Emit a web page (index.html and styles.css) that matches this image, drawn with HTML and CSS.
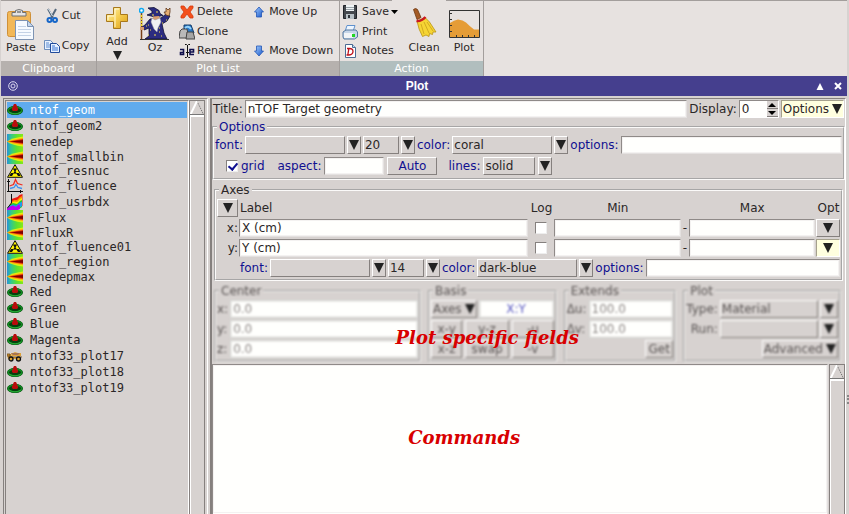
FILE: index.html
```html
<!DOCTYPE html>
<html lang="en">
<head>
<meta charset="utf-8">
<title>Plot</title>
<link rel="stylesheet" href="styles.css">
</head>
<body>
<svg class="defs" aria-hidden="true">
  <defs>
    <linearGradient id="heat" x1="0" x2="1" y1="0" y2="0">
      <stop offset="0" stop-color="#2b8fd8"/><stop offset=".25" stop-color="#30c890"/><stop offset=".6" stop-color="#5ce030"/><stop offset="1" stop-color="#86e818"/>
    </linearGradient>
    <linearGradient id="gold" x1="0" x2="1" y1="0" y2="1">
      <stop offset="0" stop-color="#fff6b8"/><stop offset=".5" stop-color="#f5cd50"/><stop offset="1" stop-color="#dc9f18"/>
    </linearGradient>
    <linearGradient id="blue" x1="0" x2="1" y1="0" y2="1">
      <stop offset="0" stop-color="#a8d0ff"/><stop offset="1" stop-color="#1453c8"/>
    </linearGradient>
  </defs>
  <symbol id="i-geom" viewBox="0 0 16 16">
    <ellipse cx="8" cy="8.500" rx="8" ry="4.500" fill="#063f0e"/>
    <ellipse cx="8" cy="8.500" rx="6.800" ry="3.500" fill="none" stroke="#128a22" stroke-width="1.600"/>
    <path d="M2 10q6 3.500 12 0" fill="none" stroke="#2eb33c" stroke-width=".8"/>
    <path d="M7 2h2l1 2v1l1 1v2l-1 1H6L5 8V6l1-1V4z" fill="#b80c0c"/>
  </symbol>
  <symbol id="i-heat" viewBox="0 0 15 15" preserveAspectRatio="none">
    <path d="M0 0h15v15H0z" fill="url(#heat)"/>
    <path d="M0 7.500Q4 4 15 2.500v10Q4 11 0 7.500z" fill="#e2ee10"/>
    <path d="M0 7.500Q5 5.500 15 4v7Q5 9.500 0 7.500z" fill="#ffa50a"/>
    <path d="M1 7.500L15 5v5z" fill="#e02808"/>
    <path d="M3 7.500l12-1.500v3z" fill="#7d0000"/>
  </symbol>
  <symbol id="i-rad" viewBox="0 0 16 14">
    <path d="M8 .7L15.500 13.300H.5z" fill="#fff200" stroke="#111" stroke-width="1"/>
    <path d="M8 8L5.800 4.500h4.400zM7 9l-2 3H2.300L4 9zM9 9l2 3h2.700L12 9z" fill="#111"/><circle cx="8" cy="8.500" r="1.200" fill="#111"/>
  </symbol>
  <symbol id="i-flu" viewBox="0 0 16 16">
    <path d="M1.500 1v13M0 13.500h16M0 3.500h3M13.500 12v3" fill="none" stroke="#111" shape-rendering="crispEdges"/>
    <path d="M2.500 8l4-1.500 2-5 2 4 5 1.500" fill="none" stroke="#f02a20" stroke-width="1.300"/>
    <path d="M3 10.500l4-1 2-3 2 3 4 1" fill="none" stroke="#3d90f0" stroke-width="1.300"/>
  </symbol>
  <symbol id="i-bdx" viewBox="0 0 16 16">
    <path d="M4.500 5l3-1 3-1 2-2 3-1v12l-3 1-9-1z" fill="#f01810"/>
    <path d="M4 8l3-2 3 0 3-3 2-1v10l-3 2-9-2z" fill="#ff8a00"/>
    <path d="M3 10l4-2.500 3 .5 3-3 2-1v9l-3 1-9-1z" fill="#f4ee00"/>
    <path d="M2 11l4-2 4 1 3-3 2-1v7l-3 2-10-1z" fill="#20c838"/>
    <path d="M1 12.500l5-2 3 1 4-3 2-.5v4l-3 2-11 1z" fill="#2098f0"/>
    <path d="M0 14.500l3-2 3-1 3 1.500 3-3 1 2 0 3-2 1H0z" fill="#c000f0"/>
    <path d="M4.500 0v9L0 14.500" fill="none" stroke="#111"/>
  </symbol>
  <symbol id="i-truck" viewBox="0 0 16 16">
    <path d="M4 5h2l2-1 3 1h3v3H5zM0 6h4l1 3h8v2H1z" fill="#dfa237"/><path d="M4 5h9l-2 2H6z" fill="#a87552"/>
    <path d="M0 6h3v2H0zM1 9h14" fill="none" stroke="#664010" stroke-width=".8"/>
    <circle cx="4" cy="11" r="2" fill="#d8a030" stroke="#111" stroke-width="1.300"/><circle cx="11.500" cy="11" r="2" fill="#d8a030" stroke="#111" stroke-width="1.300"/>
  </symbol>
  <symbol id="i-paste" viewBox="0 0 28 31">
    <rect x=".5" y="2.500" width="23" height="25" rx="2" fill="#f2b858" stroke="#cf9038"/>
    <path d="M5 7V3.500h3.500V1.500Q12 -.5 15.500 1.500v2H19V7z" fill="#e4e4e4" stroke="#6f7072"/><path d="M10 3h4" stroke="#444"/>
    <path d="M8.500 11.500h12l6 6v13h-18z" fill="#f6faff" stroke="#7d93b3"/><path d="M20.500 11.500v6h6z" fill="#c3d6ee" stroke="#7d93b3"/>
    <path d="M11 17.500h8M11 20.500h13M11 23.500h13M11 26.500h13" stroke="#c3d2e6"/>
  </symbol>
  <symbol id="i-cut" viewBox="0 0 16 16">
    <path d="M4 1l5 9M12 1L7 10" stroke="#55687c" stroke-width="2"/><path d="M4.500 1l4 7" stroke="#d9e5ee"/>
    <circle cx="5.500" cy="12" r="2" fill="none" stroke="#1766c8" stroke-width="2"/><circle cx="11" cy="12" r="2" fill="none" stroke="#1766c8" stroke-width="2"/>
  </symbol>
  <symbol id="i-copy" viewBox="0 0 16 16">
    <path d="M.5 2.500h6l3 3v6h-9z" fill="#e7f1ff" stroke="#6c8dbb"/><path d="M2 5h3M2 7h5M2 9h5" stroke="#5b8ad0"/>
    <path d="M6.500 5.500h6l3 3v6h-9z" fill="#e7f1ff" stroke="#214b9b"/><path d="M8 8h3M8 10h6M8 12h6" stroke="#3673d4"/>
  </symbol>
  <symbol id="i-add" viewBox="0 0 22 22">
    <path d="M7.500.5h7v7h7v7h-7v7h-7v-7h-7v-7h7z" fill="url(#gold)" stroke="#a8781c"/><path d="M9 20V2h4M2 13V9h6" fill="none" stroke="#fff9d8"/>
  </symbol>
  <symbol id="i-oz" viewBox="0 0 33 33">
    <path d="M2.500 6v27" stroke="#784018" stroke-width="1.500"/><path d="M2.500 8v13" stroke="#f2d820" stroke-width="1.500" stroke-dasharray="2 1"/>
    <circle cx="2.500" cy="3.500" r="2" fill="#fff" stroke="#10a8f0" stroke-width="1.500"/>
    <path d="M8 8l5-2 0-2-4-3 6-.5 5 3 1 3 3 2-8 1.500z" fill="#2c2c80" stroke="#101035" stroke-width=".8"/>
    <path d="M11 12l-5 6-3 2 2 3 5-2v8l-4 3h22l-3-6-2-9 5-3 3-5-4-2-5 4z" fill="#2c2c80" stroke="#101035" stroke-width=".8"/>
    <path d="M27 8l-2-3 2 0V1l2 2 2-2v4l-1 4z" fill="#e5ae74" stroke="#60381c" stroke-width=".8"/>
    <path d="M14 9.500l6-.5 1 4-4 3-3-3z" fill="#d99d70"/><path d="M13 11l3 2 5-2 1 4-3 6-1 4-3-3-3-7z" fill="#f1f1f3" stroke="#92929f" stroke-width=".5"/>
    <path d="M1 20h4v3H1z" fill="#d99d70"/>
    <path d="M17 5h2M9 18h1M11 23h1M9 28h1M15 28h2M20 25h1M22 29h1M23 16h1M27 13h1M13 8h2M7 19h1M20 21h1" stroke="#f7e048" stroke-width="1.200"/>
    <path d="M1 32.500h29" stroke="#333"/>
  </symbol>
  <symbol id="i-del" viewBox="0 0 16 16"><path d="M2 2h3l3 4 3-4h3v2l-3 4 3 4v2h-3l-3-4-3 4H2v-2l3-4-3-4z" fill="#f4501c" stroke="#d63a0c" stroke-width=".8"/></symbol>
  <symbol id="i-clone" viewBox="0 0 16 16">
    <path d="M5 1h7l3 8H5z" fill="#2878c8" stroke="#153c68"/><path d="M3 5h5l2 9H0L1 7z" fill="#b9b9b9" stroke="#444"/><path d="M8 8h6l2 7H7z" fill="#a5a5a5" stroke="#444"/><path d="M6 4q3-3 6 1" fill="none" stroke="#95d3fa" stroke-width="2"/>
  </symbol>
  <symbol id="i-ren" viewBox="0 0 16 16">
    <path d="M1 6.500h3.500v5H1.500v-2h3M10.500 9h4V6.500h-3.500v5h4" fill="none" stroke="#10104d" stroke-width="1.600"/>
    <path d="M6 1.500h1.500l1 1 1-1H11M8.500 2v12M6 14.500h1.500l1-1 1 1H11M7 9.500h3" fill="none" stroke="#111"/>
  </symbol>
  <symbol id="i-up" viewBox="0 0 12 12"><path d="M6 1l4.500 5H8.500v5h-5V6h-2z" fill="url(#blue)" stroke="#2457b5" stroke-width=".8"/></symbol>
  <symbol id="i-down" viewBox="0 0 12 12"><path d="M6 11l4.500-5H8.500V1h-5v5h-2z" fill="url(#blue)" stroke="#2457b5" stroke-width=".8"/></symbol>
  <symbol id="i-save" viewBox="0 0 16 16">
    <path d="M1.500 1.500h13v13h-13z" fill="#45484d" stroke="#202328"/><path d="M4 1h8v6H4z" fill="#f0f4f5"/><path d="M4 3.500h8M4 5.500h8" stroke="#9ba5ab"/><path d="M4 10h8v5H4z" fill="#b8c0c5"/><path d="M6 11h2v3H6z" fill="#30343a"/>
  </symbol>
  <symbol id="i-print" viewBox="0 0 16 16">
    <path d="M5 1.500h8l-2 6H3z" fill="#eef6ff" stroke="#5f91cd"/><path d="M1 8l3-2h10l1.500 2v5l-3 2H2l-1-2z" fill="#c6d5e8" stroke="#55789f"/><path d="M2 9h9v5H2z" fill="#f2f4f7"/><path d="M10 10h3v3h-3z" fill="#22d522"/>
  </symbol>
  <symbol id="i-notes" viewBox="0 0 16 16">
    <path d="M3.500 1.500h7l3 3v10h-10z" fill="#fff" stroke="#4a6b93"/><path d="M10.500 1.500v3h3" fill="#c7d8ef" stroke="#4a6b93"/>
    <path d="M6.800 6l-1 6M4.500 12h2.500q4-.5 4-3.500T7.500 5.500H5" fill="none" stroke="#bd101a" stroke-width="1.300"/>
  </symbol>
  <symbol id="i-clean" viewBox="0 0 28 30">
    <path d="M3.500 1.500q2-2 4 0l3.500 8-4 2z" fill="#a45a24" stroke="#6d3812" stroke-width=".8"/>
    <path d="M7 13l8-3.500 4.500 4.500L26 24l-3 0-.5 2.500-3-1-.5 3-3-1.500-3.500 1.500q-4-7-5.500-15.500z" fill="#f6d534" stroke="#b99314" stroke-width=".8"/>
    <path d="M11 16l3 10M14 14l5 11M17 14l6 9" fill="none" stroke="#c9a01c" stroke-width=".8"/><path d="M6.500 13q5 .5 9-4" fill="none" stroke="#c91820" stroke-width="2.500"/>
  </symbol>
  <symbol id="i-plot" viewBox="0 0 31 28">
    <path d="M1 27V13Q5 10 9 9.500q5 .5 8 3 4 4 8 7h5v7.500z" fill="#e59c36"/><path d="M.5.500h30v27H.5z" fill="none" stroke="#333"/>
    <path d="M1 3.500h2M1 9.500h2M1 15.500h2M1 21.500h2M7.500 27v-2M13.500 27v-2M19.500 27v-2M25.500 27v-2" stroke="#333"/>
  </symbol>
  <symbol id="i-tri" viewBox="0 0 10 10"><path d="M0 0h10L5 10z" fill="#222"/></symbol>
  <symbol id="i-scroll" viewBox="0 0 14 14"><path d="M7 0l6.500 13.500H.5" fill="none" stroke="#666" stroke-dasharray="1 1"/><path d="M7 0L.5 13.500" stroke="#fff" stroke-width="2"/><path d="M0 13.500h14" stroke="#777"/></symbol>
</svg>

<div class="app">
  <header class="ribbon">
    <section class="group clip" aria-label="Clipboard">
      <div class="tools">
        <button class="big"><svg width="28" height="31"><use href="#i-paste"/></svg>Paste</button>
        <div class="stack two">
          <button class="tool"><svg><use href="#i-cut"/></svg>Cut</button>
          <button class="tool"><svg><use href="#i-copy"/></svg>Copy</button>
        </div>
      </div>
      <h2>Clipboard</h2>
    </section>
    <section class="group list-tools" aria-label="Plot List">
      <div class="tools">
        <button class="big add"><svg width="22" height="22"><use href="#i-add"/></svg>Add<svg width="9" height="9"><use href="#i-tri"/></svg></button>
        <button class="big"><svg width="33" height="33"><use href="#i-oz"/></svg>Oz</button>
        <div class="stack">
          <button class="tool"><svg><use href="#i-del"/></svg>Delete</button>
          <button class="tool"><svg><use href="#i-clone"/></svg>Clone</button>
          <button class="tool"><svg><use href="#i-ren"/></svg>Rename</button>
        </div>
        <div class="stack moves">
          <button class="tool"><svg class="small"><use href="#i-up"/></svg>Move Up</button>
          <button class="tool"><svg class="small"><use href="#i-down"/></svg>Move Down</button>
        </div>
      </div>
      <h2>Plot List</h2>
    </section>
    <section class="group action" aria-label="Action">
      <div class="tools">
        <div class="stack">
          <button class="tool"><svg><use href="#i-save"/></svg>Save<svg class="mini" viewBox="0 0 7 4"><path d="M0 0h7L3.500 4z"/></svg></button>
          <button class="tool"><svg><use href="#i-print"/></svg>Print</button>
          <button class="tool"><svg><use href="#i-notes"/></svg>Notes</button>
        </div>
        <button class="big"><svg width="28" height="30"><use href="#i-clean"/></svg>Clean</button>
        <button class="big"><svg width="31" height="28"><use href="#i-plot"/></svg>Plot</button>
      </div>
      <h2>Action</h2>
    </section>
  </header>

  <div class="titlebar">
    <svg class="ring" viewBox="0 0 10 10"><circle cx="5" cy="5" r="4.300"/><circle cx="5" cy="5" r="2"/></svg>
    <h1>Plot</h1>
    <button aria-label="Maximize"><svg viewBox="0 0 8 8"><path d="M4 1l3.500 7h-7z" fill="#fff"/></svg></button>
    <button aria-label="Close"><svg viewBox="0 0 8 8"><path d="M1 1l6 6M7 1L1 7" stroke="#fff" stroke-width="2"/></svg></button>
  </div>

  <main class="work">
    <aside class="side">
      <ul class="plots">
        <li class="sel"><svg><use href="#i-geom"/></svg>ntof_geom</li>
        <li><svg><use href="#i-geom"/></svg>ntof_geom2</li>
        <li class="h15"><svg><use href="#i-heat"/></svg>enedep</li>
        <li class="h15"><svg><use href="#i-heat"/></svg>ntof_smallbin</li>
        <li class="h14"><svg><use href="#i-rad"/></svg>ntof_resnuc</li>
        <li><svg><use href="#i-flu"/></svg>ntof_fluence</li>
        <li><svg><use href="#i-bdx"/></svg>ntof_usrbdx</li>
        <li class="h15"><svg><use href="#i-heat"/></svg>nFlux</li>
        <li class="h15"><svg><use href="#i-heat"/></svg>nFluxR</li>
        <li class="h14"><svg><use href="#i-rad"/></svg>ntof_fluence01</li>
        <li class="h15"><svg><use href="#i-heat"/></svg>ntof_region</li>
        <li class="h15"><svg><use href="#i-heat"/></svg>enedepmax</li>
        <li><svg><use href="#i-geom"/></svg>Red</li>
        <li><svg><use href="#i-geom"/></svg>Green</li>
        <li><svg><use href="#i-geom"/></svg>Blue</li>
        <li><svg><use href="#i-geom"/></svg>Magenta</li>
        <li><svg><use href="#i-truck"/></svg>ntof33_plot17</li>
        <li><svg><use href="#i-geom"/></svg>ntof33_plot18</li>
        <li><svg><use href="#i-geom"/></svg>ntof33_plot19</li>
      </ul>
      <div class="scroll"><svg><use href="#i-scroll"/></svg><div class="thumb"></div></div>
    </aside>

    <div class="form">
      <div class="row head">
        <label for="title">Title:</label><input id="title" class="grow" value="nTOF Target geometry">
        <label for="display">Display:</label>
        <span class="spin"><input id="display" value="0"><span class="arrows"><button aria-label="Increase"><svg viewBox="0 0 8 4"><path d="M0 4h8L4 0z"/></svg></button><button aria-label="Decrease"><svg viewBox="0 0 8 4"><path d="M0 0h8L4 4z"/></svg></button></span></span>
        <button class="btn yellow opts">Options<svg><use href="#i-tri"/></svg></button>
      </div>

      <fieldset class="frame options navy">
        <legend>Options</legend>
        <div class="row">
          <label for="font">font:</label><select id="font" class="w100"><option></option></select><button class="btn drop" aria-label="Fonts"><svg><use href="#i-tri"/></svg></button>
          <select class="w36" aria-label="Font size"><option>20</option></select><button class="btn drop" aria-label="Sizes"><svg><use href="#i-tri"/></svg></button>
          <label for="color">color:</label><select id="color" class="w100"><option>coral</option></select><button class="btn drop" aria-label="Colors"><svg><use href="#i-tri"/></svg></button>
          <label for="opt">options:</label><input id="opt" class="grow">
        </div>
        <div class="row second">
          <input type="checkbox" id="grid" checked><label for="grid">grid</label>
          <label class="aspect" for="aspect">aspect:</label><input id="aspect" class="w60">
          <button class="btn auto">Auto</button>
          <label for="lines">lines:</label><select id="lines" class="w52"><option>solid</option></select><button class="btn drop" aria-label="Line styles"><svg><use href="#i-tri"/></svg></button>
        </div>
      </fieldset>

      <fieldset class="frame axes">
        <legend>Axes</legend>
        <div class="axis-grid">
          <button class="btn pick" aria-label="Axes"><svg><use href="#i-tri"/></svg></button><span>Label</span><span class="mid">Log</span><span class="mid">Min</span><span></span><span class="mid">Max</span><span class="mid">Opt</span>
          <label class="end" for="xl">x:</label><input id="xl" value="X (cm)"><input type="checkbox" aria-label="x log"><input aria-label="x min"><span class="mid">-</span><input aria-label="x max"><button class="btn" aria-label="x options"><svg><use href="#i-tri"/></svg></button>
          <label class="end" for="yl">y:</label><input id="yl" value="Y (cm)"><input type="checkbox" aria-label="y log"><input aria-label="y min"><span class="mid">-</span><input aria-label="y max"><button class="btn yellow" aria-label="y options"><svg><use href="#i-tri"/></svg></button>
        </div>
        <div class="row navy third">
          <label for="afont">font:</label><select id="afont" class="w100"><option></option></select><button class="btn drop" aria-label="Axis fonts"><svg><use href="#i-tri"/></svg></button>
          <select class="w36" aria-label="Axis font size"><option>14</option></select><button class="btn drop" aria-label="Axis sizes"><svg><use href="#i-tri"/></svg></button>
          <label for="acolor">color:</label><select id="acolor" class="w100"><option>dark-blue</option></select><button class="btn drop" aria-label="Axis colors"><svg><use href="#i-tri"/></svg></button>
          <label for="aopt">options:</label><input id="aopt" class="grow">
        </div>
      </fieldset>

      <div class="specific">
        <div class="faded">
          <fieldset class="frame center">
            <legend>Center</legend>
            <div class="pairs">
              <label for="cx">x:</label><input id="cx" value="0.0">
              <label for="cy">y:</label><input id="cy" value="0.0">
              <label for="cz">z:</label><input id="cz" value="0.0">
            </div>
          </fieldset>
          <fieldset class="frame basis">
            <legend>Basis</legend>
            <div class="row"><button class="btn opts">Axes<svg><use href="#i-tri"/></svg></button><input class="grow xy" aria-label="Basis" value="X:Y"></div>
            <div class="cells">
              <button class="btn">x-y</button><button class="btn">y-z</button><button class="btn">-u</button>
              <button class="btn">x-z</button><button class="btn">swap</button><button class="btn">-v</button>
            </div>
          </fieldset>
          <fieldset class="frame extends">
            <legend>Extends</legend>
            <div class="pairs">
              <label for="du">Δu:</label><input id="du" value="100.0">
              <label for="dv">Δv:</label><input id="dv" value="100.0">
              <span></span><button class="btn get">Get</button>
            </div>
          </fieldset>
          <fieldset class="frame kind">
            <legend>Plot</legend>
            <div class="triples">
              <label for="type">Type:</label><select id="type"><option>Material</option></select><button class="btn" aria-label="Types"><svg><use href="#i-tri"/></svg></button>
              <label for="run">Run:</label><select id="run"><option></option></select><button class="btn" aria-label="Runs"><svg><use href="#i-tri"/></svg></button>
              <button class="btn opts adv">Advanced<svg><use href="#i-tri"/></svg></button>
            </div>
          </fieldset>
        </div>
        <p class="note fields">Plot specific fields</p>
      </div>

      <div class="commands">
        <textarea aria-label="Commands"></textarea>
        <div class="scroll"><svg><use href="#i-scroll"/></svg><div class="thumb"></div></div>
        <p class="note cmds">Commands</p>
      </div>
    </div>
    <div class="grip" aria-hidden="true"></div>
  </main>
</div>
</body>
</html>
```

FILE: styles.css
```css
:root {
  --bg: #d7d2d0;
  --dark: #85807e;
  --light: #ffffff;
  --navy: #101090;
}
* { box-sizing: border-box; }
body {
  margin: 0;
  background: var(--bg);
  color: #2b2727;
  font: 12px/18px "DejaVu Sans", sans-serif;
  overflow: hidden;
}
.defs { position: absolute; width: 0; height: 0; }
button, input, select, textarea { font: inherit; color: inherit; margin: 0; border-radius: 0; }
button { border: 0; padding: 0; background: none; }
h1, h2, p, ul { margin: 0; padding: 0; }
svg { display: block; flex: none; }
.app { height: 100vh; display: flex; flex-direction: column; padding: 0 2px 0 1px; }

/* ribbon */
.ribbon {
  position: relative;
  display: flex;
  background: #e7e2e0;
  border-top: 1px solid #a39e9c;
  font-size: 11px;
}
.ribbon::before {
  content: "";
  position: absolute;
  left: 391px;
  top: -1px;
  width: 54px;
  height: 1px;
  background: #e7e2e0;
}
.group { border-right: 1px solid #a39e9c; }
.group h2 {
  font: inherit;
  line-height: 15px;
  height: 15px;
  text-align: center;
  color: #fff;
  background: #b6b1ae;
}
.group.action h2 { background: #b1bebe; }
.tools { display: flex; height: 60px; }
.clip .tools { padding-left: 5px; gap: 8px; width: 95px; }
.list-tools .tools { padding-left: 8px; width: 242px; }
.action .tools { padding-left: 2px; width: 143px; gap: 8px; }
.big {
  display: flex;
  flex-direction: column;
  align-items: center;
  justify-content: flex-end;
  line-height: 14px;
  padding-bottom: 6px;
  gap: 1px;
}
.list-tools .big { width: 36px; }
.list-tools .add { width: 24px; padding-bottom: 1px; gap: 2px; margin-right: 8px; }
.add svg:first-child { margin-bottom: 4px; }
.action .big { min-width: 32px; gap: 3px; }
.action .big:nth-child(2) { margin-left: 2px; }
.stack { display: flex; flex-direction: column; padding-top: 1px; }
.stack.two { justify-content: space-between; padding: 5px 0 5px; }
.stack.moves { justify-content: space-between; margin-left: 11px; }
.list-tools .stack:not(.moves) { margin-left: 6px; }
.tool { display: flex; align-items: center; height: 20px; gap: 2px; }
.tool svg { width: 16px; height: 16px; }
.tool .small { width: 12px; height: 12px; margin-right: 2px; }
.tool .mini { width: 7px; height: 4px; }
.action .tool { gap: 4px; }
.action .tool .mini { margin-left: -2px; }

/* window title */
.titlebar {
  display: flex;
  align-items: center;
  gap: 10px;
  height: 20px;
  padding: 0 5px 0 7px;
  background: #453f8e;
  color: #fff;
}
.titlebar h1 { flex: 1; text-align: center; font: bold 12px/20px "Liberation Sans", sans-serif; }
.titlebar svg { width: 8px; height: 8px; }
.titlebar .ring { width: 10px; height: 10px; fill: none; stroke: #d9d7ee; }

/* plot list */
.work { flex: 1; display: flex; min-height: 0; }
.side {
  display: flex;
  width: 205px;
  flex: none;
  margin: 2px 0 0 2px;
  padding: 1px 2px 0 1px;
  border: solid var(--dark);
  border-width: 1px 0 0 1px;
  border-right: 1px solid #fff;
}
.plots {
  flex: 1;
  list-style: none;
  border: 1px solid var(--dark);
  border-right-color: #fff;
  border-bottom: 0;
  padding: 1px;
  font: 12px/14px "DejaVu Sans Mono", monospace;
}
.plots li { display: flex; align-items: center; height: 16px; gap: 7px; }
.plots svg { width: 16px; height: 16px; }
.plots .h15, .plots .h15 svg { height: 15px; }
.plots .h14, .plots .h14 svg { height: 14px; }
.plots .sel { background: #60abee; color: #fff; }
.scroll {
  display: flex;
  flex-direction: column;
  width: 16px;
  flex: none;
  border: solid var(--dark);
  border-width: 1px 1px 0 1px;
}
.scroll svg { width: 14px; height: 14px; }
.thumb { flex: 1; border: solid #fff; border-width: 2px 0 0 1px; }

/* form */
.form {
  flex: 1;
  min-width: 0;
  display: flex;
  flex-direction: column;
  margin: 2px 0 0 2px;
  border: 1px solid var(--dark);
  border-width: 1px 0 0 2px;
  border-right: 1px solid #fff;
}
.row { display: flex; align-items: center; gap: 2px; height: 20px; }
.navy, .navy legend { color: var(--navy); }
.navy input, .navy select { color: #2b2727; }
input:not([type="checkbox"]), textarea {
  background: #fffffd;
  border: 1px solid #8f8a88;
  border-right-color: #e4e1e0;
  border-bottom-color: #e4e1e0;
  outline: 1px solid #f4f2f1;
  outline-offset: -2px;
  height: 18px;
  padding: 0 2px;
  min-width: 0;
}
select {
  appearance: none;
  height: 18px;
  padding: 0 1px;
  line-height: 14px;
  background: var(--bg);
  border: 1px solid #fff;
  border-right: 1px solid var(--dark);
  border-bottom: 1px solid var(--dark);
}
.btn {
  display: flex;
  align-items: center;
  justify-content: center;
  height: 18px;
  border: 1px solid #fff;
  border-right-color: var(--dark);
  border-bottom-color: var(--dark);
}
.btn svg { width: 10px; height: 10px; }
.btn.yellow { background: #ffffdf; border-color: #a5a18d #fff #fff #a5a18d; }
.drop { width: 14px; }
.opts { gap: 3px; padding: 0 1px; }
.grow { flex: 1; width: 0; }
.w100 { width: 100px; }
.w60 { width: 60px; }
.w52 { width: 52px; }
.w36 { width: 36px; }
input[type="checkbox"] {
  appearance: none;
  width: 12px;
  height: 12px;
  background: #fff;
  border: 1px solid var(--dark);
  border-right-color: #eee;
  border-bottom-color: #eee;
  justify-self: center;
}
input[type="checkbox"]:checked::before {
  content: "";
  display: block;
  width: 4px;
  height: 7px;
  margin: 0 3px;
  border: solid var(--navy);
  border-width: 0 2px 2px 0;
  rotate: 40deg;
}
.head { padding: 0 1px 0 1px; }
.spin { display: flex; width: 40px; height: 18px; background: #fffffd; border: 1px solid #8f8a88; border-right-color: #fff; border-bottom-color: #fff; }
.spin input { flex: 1; width: 0; height: 16px; border: 0; outline: 0; }
.arrows { display: flex; flex-direction: column; width: 11px; }
.arrows button { flex: 1; display: flex; align-items: center; justify-content: center; background: var(--bg); border-bottom: 1px solid var(--dark); }
.arrows svg { width: 8px; height: 4px; }

.frame {
  min-width: 0;
  margin: 0;
  padding: 0 1px 1px;
  border: 2px groove #fff;
  border-color: #fbfaf9;
}
.frame legend { padding: 0 2px; margin-left: 2px; line-height: 16px; }
.options .second { padding-left: 11px; height: 22px; gap: 3px; }
.aspect { margin-left: 10px; }
.auto { width: 50px; margin-right: 8px; }
.axes { margin: 2px 2px 0; }
.axis-grid {
  display: grid;
  grid-template-columns: 21px minmax(0, 288fr) 24px minmax(0, 126fr) 6px minmax(0, 126fr) 24px;
  grid-auto-rows: 20px;
  align-items: center;
  column-gap: 1px;
}
.axis-grid span { padding-left: 1px; }
.mid { text-align: center; }
.end { text-align: right; }
.third { padding-left: 23px; }

.specific { position: relative; padding: 2px 4px 2px 2px; }
.faded {
  display: grid;
  grid-template-columns: 206fr 128fr 112fr 157fr;
  column-gap: 7px;
  color: #595453;
  filter: blur(1px);
}
.faded .frame { border-color: #f4f2f1; }
.faded input:not([type="checkbox"]) { color: #8d8785; border-color: #d4d6d3; }
.pairs { display: grid; grid-template-columns: auto minmax(0, 1fr); grid-auto-rows: 20px; align-items: center; column-gap: 2px; }
.cells { display: grid; grid-template-columns: 27fr 38fr 36fr; grid-auto-rows: 20px; align-items: center; gap: 0 3px; }
.triples { display: grid; grid-template-columns: auto minmax(0, 1fr) 18px; grid-auto-rows: 20px; align-items: center; column-gap: 2px; }
.triples label { text-align: right; }
.adv { grid-column: 2 / 4; justify-self: end; }
.get { justify-self: end; width: 28px; }
.faded input.xy:not([type="checkbox"]) { color: #5555c0; text-align: center; }
.note {
  position: absolute;
  color: #d80000;
  font: italic bold 18px/22px "DejaVu Serif", serif;
  white-space: nowrap;
}
.fields { left: 29%; top: 46px; }
.cmds { left: 31%; top: 63px; }
.commands { position: relative; flex: 1; display: flex; min-height: 0; }
.commands textarea { flex: 1; height: auto; resize: none; border-bottom: 0; margin-right: 1px; }
.grip { align-self: flex-end; margin-bottom: 110px; width: 3px; height: 9px; margin-right: -2px; border-right: 2px dotted #888; }
```
